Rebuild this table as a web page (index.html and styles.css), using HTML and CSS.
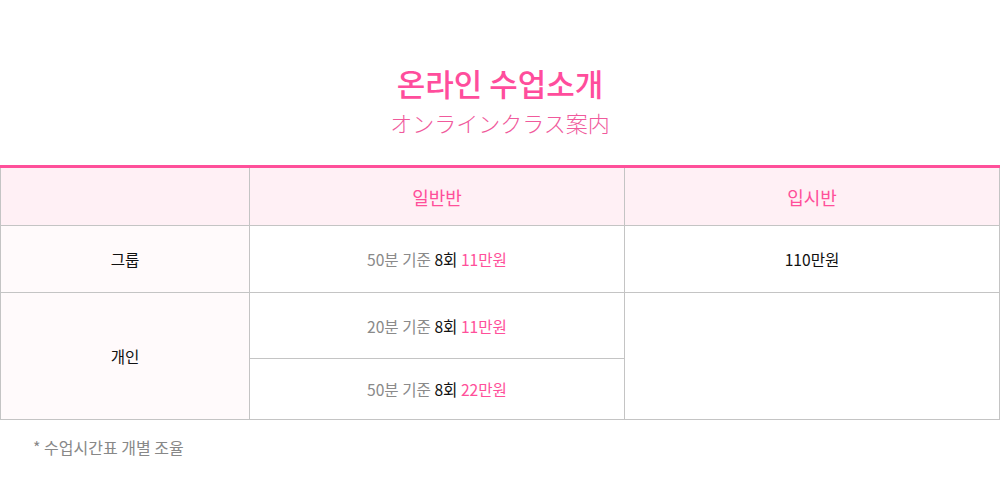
FILE: index.html
```html
<!DOCTYPE html>
<html>
<head>
<meta name="viewport" content="width=device-width, initial-scale=1">
<link rel="stylesheet" href="styles.css">
</head>
<body>

<div class="container">

<header class="title">
   <h1>온라인 수업소개</h1>
   <p class="sub">オンラインクラス案内</p>
</header>

<table class="price">
  <tr>
    <th class="blank"></th>
    <th>일반반</th>
    <th>입시반</th>
  </tr>
  <tr class="row1">
    <td class="kind">그룹</td>
    <td><span class="gray">50분 기준</span> 8회 <span class="pink">11만원</span></td>
    <td>110만원</td>
  </tr>
  <tr class="row2">
    <td class="kind" rowspan="2">개인</td>
    <td><span class="gray">20분 기준</span> 8회 <span class="pink">11만원</span></td>
    <td rowspan="2"></td>
  </tr>
  <tr class="row3">
    <td><span class="gray">50분 기준</span> 8회 <span class="pink">22만원</span></td>
  </tr>
</table>

<p class="note">* 수업시간표 개별 조율</p>

</div>

</body>
</html>
```

FILE: styles.css
```css
body {
    margin: 0;
    background: #fff;
    font-family: "Noto Sans CJK KR", "Noto Sans", sans-serif;
    color: #111;
}

div.container {
    width: 1000px;
}

.title {
    text-align: center;
    padding-top: 60px;
    height: 105px;
}

.title h1 {
    margin: 0;
    font-size: 31px;
    font-weight: 500;
    line-height: 46px;
    color: #ff4d9c;
}

.title .sub {
    margin: 0;
    font-family: "Noto Sans CJK JP", sans-serif;
    font-size: 22px;
    font-weight: 300;
    line-height: 32px;
    color: #f05a9c;
}

table.price {
    border-collapse: collapse;
    width: 1000px;
    table-layout: fixed;
    border-top: 3px solid #ff4f9a;
}

table.price th, table.price td {
    border: 1px solid #c4c4c4;
    text-align: center;
    padding: 0;
    font-size: 15.6px;
}

table.price th {
    background: #fff0f5;
    color: #ff4f9a;
    font-weight: normal;
    font-size: 18px;
    height: 57px;
}

table.price th.blank {
    width: 248px;
}

table.price td.kind {
    background: #fffafb;
}

.row1 td { height: 66px; }
.row2 td { height: 65px; }
.row3 td { height: 60px; }

.gray { color: #8a8a8a; }
.pink { color: #ff4f9a; }

.note {
    margin: 15px 0 0 33px;
    font-size: 16px;
    color: #888;
}
```
